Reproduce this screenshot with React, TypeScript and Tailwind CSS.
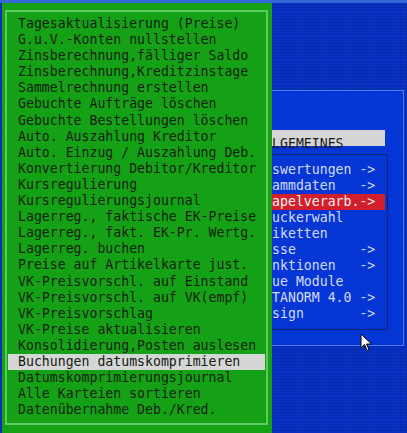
import React from "react";

const mono = "font-['DejaVu_Sans_Mono',monospace] text-[13.2px] leading-[16px]";

const left = [
  "Tagesaktualisierung (Preise)",
  "G.u.V.-Konten nullstellen",
  "Zinsberechnung,fälliger Saldo",
  "Zinsberechnung,Kreditzinstage",
  "Sammelrechnung erstellen",
  "Gebuchte Aufträge löschen",
  "Gebuchte Bestellungen löschen",
  "Auto. Auszahlung Kreditor",
  "Auto. Einzug / Auszahlung Deb.",
  "Konvertierung Debitor/Kreditor",
  "Kursregulierung",
  "Kursregulierungsjournal",
  "Lagerreg., faktische EK-Preise",
  "Lagerreg., fakt. EK-Pr. Wertg.",
  "Lagerreg. buchen",
  "Preise auf Artikelkarte just.",
  "VK-Preisvorschl. auf Einstand",
  "VK-Preisvorschl. auf VK(empf)",
  "VK-Preisvorschlag",
  "VK-Preise aktualisieren",
  "Konsolidierung,Posten auslesen",
  "Buchungen datumskomprimieren",
  "Datumskomprimierungsjournal",
  "Alle Karteien sortieren",
  "Datenübernahme Deb./Kred.",
];

const right = [
  "Auswertungen ->",
  "Stammdaten   ->",
  "Stapelverarb.->",
  "Druckerwahl",
  "Etiketten",
  "Kasse        ->",
  "Funktionen   ->",
  "Neue Module",
  "DATANORM 4.0 ->",
  "Design       ->",
];

export default function App() {
  return (
    <div className="relative w-[407px] h-[433px] overflow-hidden flex flex-col bg-[#0731c9]">
      {/* top strip */}
      <div className="h-[3px] bg-[#3566d8] shrink-0" />
      <div className="flex-1 bg-[#0631c4] bg-[radial-gradient(#0a2596_0.7px,transparent_1.1px)] bg-[length:3px_3px]" />

      {/* background window */}
      <div className="absolute left-[180px] top-[90px] w-[224px] h-[256px] bg-[#0436d6] border-t border-r border-b border-[#4f7df0] flex flex-col">
        <div className="ml-[60px] mt-[39px] w-[145px] h-[16px] bg-[#d5d5d5] text-[#1c1c1c] pl-[16.2px] whitespace-pre">
          <span className={mono}>ALLGEMEINES</span>
        </div>
        <div className="ml-[60px] mt-[8px] w-[148px] h-[176px] border border-[#13236e] pt-[7px] flex flex-col">
          {right.map((t, i) => (
            <div
              key={t}
              className={`${mono} h-[16px] mr-[2px] pl-[15.2px] whitespace-pre ${
                i === 2 ? "bg-[#d31f2c] text-[#f2f2f2]" : "text-[#d3dcff]"
              }`}
            >
              {t}
            </div>
          ))}
        </div>
      </div>

      {/* mouse cursor */}
      <svg
        className="absolute left-[360px] top-[333px]"
        width="13"
        height="20"
        viewBox="0 0 13 20"
      >
        <path
          d="M1 1 L1 15 L4.5 11.5 L7 17.5 L9 16.6 L6.6 11 L11.5 11 Z"
          fill="#fff"
          stroke="#000"
          strokeWidth="1"
          strokeLinejoin="round"
        />
      </svg>

      {/* foreground menu */}
      <div className="absolute left-[2px] top-[3px] w-[270px] h-[430px] bg-[#15a115] pt-[7px] pl-[3px] pr-[4px] pb-[8px]">
        <div className="h-full border-2 border-[#5fc85f] pt-[4px] flex flex-col">
          {left.map((t, i) => (
            <div
              key={t}
              className={`${mono} h-[16.1px] shrink-0 mx-[1px] pl-[10px] whitespace-pre text-[#13210f] ${
                i === 21 ? "bg-[#d6d6d6]" : ""
              }`}
            >
              {t}
            </div>
          ))}
        </div>
      </div>
    </div>
  );
}
